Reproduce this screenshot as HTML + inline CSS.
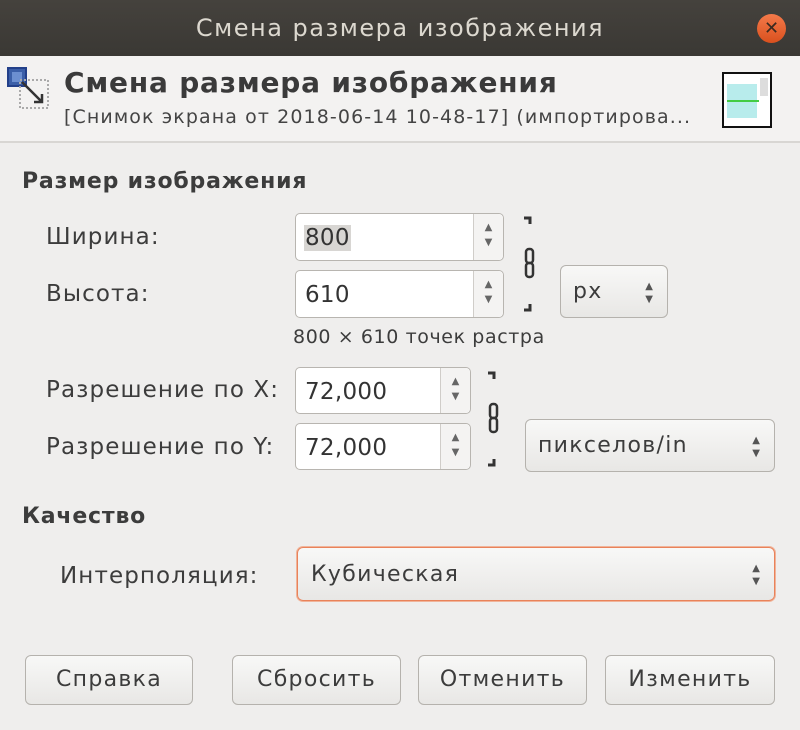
<!DOCTYPE html>
<html><head><meta charset="utf-8"><style>
*{box-sizing:border-box;margin:0;padding:0}
body{width:800px;height:730px;background:#efeeed;font-family:"DejaVu Sans","Liberation Sans",sans-serif;color:#3c3c3c;position:relative;overflow:hidden;letter-spacing:1.2px}
.a{position:absolute;white-space:nowrap}
.title{left:0;top:0;width:800px;height:56px;background:linear-gradient(#45423d,#3a3834);color:#dcd8cf;font-size:24px;text-align:center;line-height:56px;letter-spacing:1.5px}
.close{left:757px;top:14px;width:29px;height:29px;border-radius:50%;background:linear-gradient(#f47a4a,#d9501e);color:#3a2a20;font-size:18px;font-weight:bold;text-align:center;line-height:29px;letter-spacing:0}
.hdr{left:0;top:56px;width:800px;height:87px;background:#f3f2f1;border-bottom:2px solid #d8d6d3}
.lbl{font-size:23px;color:#3c3c3c;letter-spacing:1.1px}
.ent{background:#fff;border:1px solid #b8b5b0;border-radius:5px}
.spin{position:absolute;right:0;top:0;bottom:0;width:30px;border-left:1px solid #d0cdc9;background:#f4f3f2;border-radius:0 5px 5px 0;font-size:10px;color:#666;text-align:center;line-height:15px;padding-top:6px;letter-spacing:0}
.val{position:absolute;left:9px;font-size:23px;color:#333;letter-spacing:0.3px}
.btn{background:linear-gradient(#f8f8f7,#e8e7e5);border:1px solid #b5b2ad;border-radius:6px;font-size:22px;text-align:center;line-height:48px;color:#3c3c3c;letter-spacing:1.3px}
.arr{position:absolute;font-size:10px;color:#555;line-height:13px;text-align:center;letter-spacing:0}
</style></head><body>
<div class="a title">Смена размера изображения</div>
<div class="a close">✕</div>
<div class="a hdr"></div>
<svg class="a" style="left:6px;top:66px" width="46" height="46">
<rect x="2" y="2" width="18" height="18" fill="#3b5fa8" stroke="#23408a" stroke-width="2"/>
<rect x="6" y="6" width="10" height="10" fill="#6c8fd0"/>
<rect x="14" y="14" width="28" height="28" fill="none" stroke="#aaa" stroke-width="2" stroke-dasharray="2 2"/>
<path d="M16 16 L36 36 M36 28 L36 36 L28 36" stroke="#333" stroke-width="2.5" fill="none"/>
</svg>
<div class="a" style="left:64px;top:66px;font-size:28px;font-weight:bold;color:#3a3a3a;letter-spacing:0.8px">Смена размера изображения</div>
<div class="a" style="left:64px;top:106px;font-size:19px;color:#444;letter-spacing:1.1px">[Снимок экрана от 2018-06-14 10-48-17] (импортирова...</div>
<div class="a" style="left:722px;top:72px;width:50px;height:56px;border:2px solid #111;background:#fff">
<div style="position:absolute;left:3px;top:10px;width:30px;height:34px;background:#b8ecec"></div>
<div style="position:absolute;left:3px;top:26px;width:32px;height:2px;background:#4c4"></div>
<div style="position:absolute;left:36px;top:4px;width:8px;height:18px;background:#ddd"></div>
</div>
<div class="a" style="left:22px;top:169px;font-size:22px;font-weight:bold;letter-spacing:0.8px">Размер изображения</div>
<div class="a lbl" style="left:46px;top:224px">Ширина:</div>
<div class="a lbl" style="left:46px;top:281px">Высота:</div>
<div class="a ent" style="left:295px;top:213px;width:209px;height:48px"><div class="val" style="top:11px;background:#d8d6d3;padding:0 1px;left:8px">800</div><div class="spin">▲<br>▼</div></div>
<div class="a ent" style="left:295px;top:270px;width:209px;height:48px"><div class="val" style="top:11px">610</div><div class="spin">▲<br>▼</div></div>
<svg class="a" style="left:518px;top:215px" width="22" height="98"><path d="M6 3H12V9M6 95H12V89" stroke="#333" stroke-width="3" fill="none"/><rect x="8" y="34" width="7" height="14" rx="3" fill="none" stroke="#333" stroke-width="2.5"/><rect x="8" y="48" width="7" height="14" rx="3" fill="none" stroke="#333" stroke-width="2.5"/></svg>
<div class="a ent btn" style="left:560px;top:265px;width:108px;height:53px;text-align:left;padding-left:12px;line-height:52px">px<div class="arr" style="right:14px;top:14px">▲<br>▼</div></div>
<div class="a" style="left:293px;top:326px;font-size:19px;letter-spacing:0.6px">800 × 610 точек растра</div>
<div class="a lbl" style="left:46px;top:377px">Разрешение по X:</div>
<div class="a lbl" style="left:46px;top:434px">Разрешение по Y:</div>
<div class="a ent" style="left:295px;top:367px;width:176px;height:47px"><div class="val" style="top:11px">72,000</div><div class="spin">▲<br>▼</div></div>
<div class="a ent" style="left:295px;top:423px;width:176px;height:47px"><div class="val" style="top:11px">72,000</div><div class="spin">▲<br>▼</div></div>
<svg class="a" style="left:482px;top:370px" width="22" height="98"><path d="M6 3H12V9M6 95H12V89" stroke="#333" stroke-width="3" fill="none"/><rect x="8" y="34" width="7" height="14" rx="3" fill="none" stroke="#333" stroke-width="2.5"/><rect x="8" y="48" width="7" height="14" rx="3" fill="none" stroke="#333" stroke-width="2.5"/></svg>
<div class="a btn" style="left:525px;top:419px;width:250px;height:53px;text-align:left;padding-left:12px;line-height:52px">пикселов/in<div class="arr" style="right:14px;top:14px">▲<br>▼</div></div>
<div class="a" style="left:22px;top:504px;font-size:22px;font-weight:bold;letter-spacing:0.8px">Качество</div>
<div class="a lbl" style="left:60px;top:563px">Интерполяция:</div>
<div class="a btn" style="left:297px;top:547px;width:478px;height:54px;border-color:#e9825a;box-shadow:0 0 0 1px #f0b49a;text-align:left;padding-left:13px;line-height:53px">Кубическая<div class="arr" style="right:14px;top:14px">▲<br>▼</div></div>
<div class="a btn" style="left:25px;top:655px;width:168px;height:50px">Справка</div>
<div class="a btn" style="left:232px;top:655px;width:169px;height:50px">Сбросить</div>
<div class="a btn" style="left:418px;top:655px;width:169px;height:50px">Отменить</div>
<div class="a btn" style="left:605px;top:655px;width:170px;height:50px">Изменить</div>
</body></html>
